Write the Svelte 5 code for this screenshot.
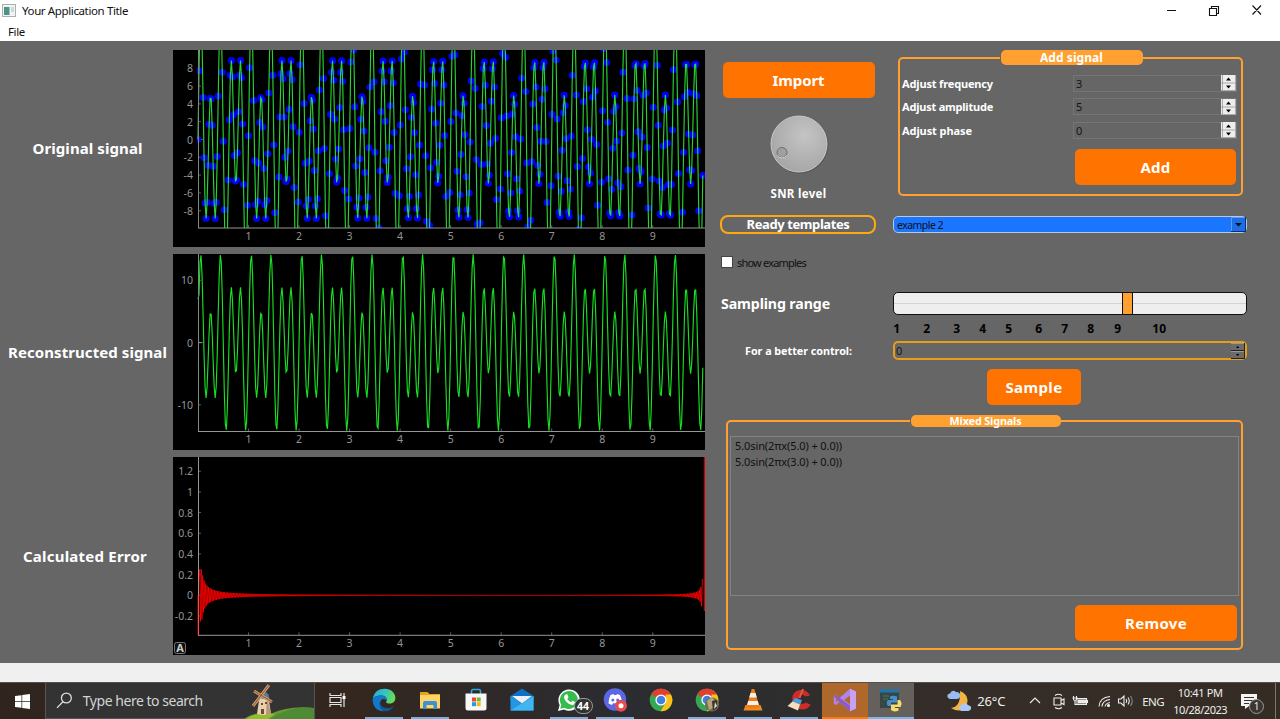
<script>
  const X0 = 25, UX = 50.53;
  const f = (t) => 10 * Math.sin(10 * Math.PI * t) + 5 * Math.sin(6 * Math.PI * t);

  const samples = [];
  for (let i = 0; i < 500; i++) {
    const t = i * 0.02002;
    samples.push([t, f(t)]);
  }
  const toPath = (pts, y0, uy) =>
    pts.map(([t, v], i) => (i ? 'L' : 'M') + (X0 + t * UX).toFixed(2) + ' ' + (y0 - v * uy).toFixed(2)).join('');

  const originalPath = toPath(samples, 89.5, 8.9);
  const dots = samples
    .filter((p) => Math.abs(p[1]) < 10.3)
    .map(([t, v]) => [X0 + t * UX, 89.5 - v * 8.9]);
  const fine = samples.map(([t, v], i) => [t, i ? v : 7]);
  const reconPath = toPath(fine, 88.6, 6.22);

  const err = [[0, 0], [0.005, -0.5], [0.012, 1.2 * 0.1]];
  for (let i = 1; i < 990; i++) {
    const t = 0.02 + i * 0.0145;
    if (t > 9.995) break;
    const env = Math.min(0.25, 0.014 / Math.pow(t, 1.1)) + Math.min(0.17, 0.0045 / (10.01 - t)) + 0.001;
    err.push([t, (i % 2 ? 1 : -1) * env]);
  }
  const errPath = toPath(err, 138.3, 103.4);

  const xt = [1, 2, 3, 4, 5, 6, 7, 8, 9];
  const plots = [
    { name: 'Original signal', w: 110, h: 197, base: 178, lab: 186, y0: 89.5, uy: 8.9, ticks: [8, 6, 4, 2, 0, -2, -4, -6, -8] },
    { name: 'Reconstructed signal', w: 159, h: 196, base: 177.5, lab: 185, y0: 88.6, uy: 6.22, ticks: [10, 0, -10] },
    { name: 'Calculated Error', w: 124, h: 198, base: 178.3, lab: 186, y0: 138.3, uy: 103.4, ticks: [1.2, 1, 0.8, 0.6, 0.4, 0.2, 0, -0.2] }
  ];
  const fields = [
    { label: 'Adjust frequency', w: 91, value: 3 },
    { label: 'Adjust amplitude', w: 91, value: 5 },
    { label: 'Adjust phase', w: 70, value: 0 }
  ];
  const scale = [[1, 8], [2, 30], [3, 30], [4, 26], [5, 26], [6, 30], [7, 26], [8, 26], [9, 27], [10, 45]];
  const mixed = ['5.0sin(2πx(5.0) + 0.0))', '5.0sin(2πx(3.0) + 0.0))'];
  const apps = [
    ['tasks', ''], ['edge', 'open'], ['files', 'open'], ['store', ''], ['mail', ''], ['whatsapp', 'open'],
    ['discord', 'open'], ['chrome', ''], ['chrome2', 'open'], ['vlc', 'open'], ['cc', 'open'], ['vs', 'alert'], ['python', 'active']
  ];

  // Tracks the letters of a label so that it fills the given width.
  function fit(node, width) {
    const natural = node.getBoundingClientRect().width;
    const n = node.textContent.length;
    const gap = (width - natural) / n;
    node.style.letterSpacing = gap.toFixed(3) + 'px';
  }
</script>

{#snippet chrome()}
  <circle cx="12" cy="12" r="11.3" fill="#34a853" />
  <path d="M2.2 6.4A11.3 11.3 0 0 1 21.8 6.4L12 12Z" fill="#ea4335" />
  <path d="M2.2 6.4L12 12V6.6H21.9A11.3 11.3 0 0 0 2.2 6.4Z" fill="#e0402f" />
  <path d="M21.9 6.5A11.3 11.3 0 0 1 11.6 23.3L16.8 14.6L16.6 6.5Z" fill="#fbc116" />
  <path d="M2.2 6.4L7.2 14.8L12 12Z" fill="#34a853" />
  <circle cx="12" cy="12" r="5.6" fill="#fff" />
  <circle cx="12" cy="12" r="4.3" fill="#3f7fe0" />
{/snippet}

<div class="window">
  <header class="title">
    <svg width="14" height="13" viewBox="0 0 14 13"><rect x=".5" y=".5" width="13" height="12" fill="#f2f4f4" stroke="#a9b0b2" /><rect x="2" y="3" width="5.5" height="8" fill="#4b9387" /><rect x="9" y="3" width="3" height="5" fill="#cbdad9" /></svg>
    <span class="cap"><span use:fit={106}>Your Application Title</span></span>
    <svg class="winbtns" width="94" height="12" viewBox="0 0 94 12" fill="none" stroke="#111" stroke-width="1.1"><path d="M1 6.5H10M43.500 4.500H50.500V11.500H43.500ZM45.500 4V2.500H52.500V9.500H51M86.500 1.500L95 10.500M95 1.500L86.500 10.500" /></svg>
  </header>
  <nav class="menu"><span use:fit={17}>File</span></nav>

  <main>
    <section class="plots">
      {#each plots as p, k}
        <h2 class:last={k === 2}><span use:fit={p.w}>{p.name}</span></h2>
        <svg class="plot" width="532" height={p.h} viewBox="0 0 532 {p.h}">
          <rect width="532" height={p.h} fill="#000" />
          <clipPath id="clip{k}"><rect x="24" y="0" width="508" height={p.base} /></clipPath>
          <g stroke="#969696" stroke-width="1">
            {#if k !== 2}<path d="M25.500 {p.y0}h4" />{/if}
            {#each p.ticks as v}<path opacity=".6" d="M25.500 {p.y0 - v * p.uy}h2.500" />{/each}
            {#each xt as v}<path opacity=".6" d="M{X0 + v * UX} {p.base}v-3" />{/each}
          </g>
          <g clip-path="url(#clip{k})">
            {#if k === 0}
              {#each dots as d}<circle cx={d[0]} cy={d[1]} r="3.500" fill="#0000fa" />{/each}
              <path d={originalPath} fill="none" stroke="#2cf038" stroke-width="1.150" opacity=".88" />
            {:else if k === 1}
              <path d={reconPath} fill="none" stroke="#16e022" stroke-width="1.150" />
            {:else}
              <path d={errPath} fill="none" stroke="#f00" stroke-width=".8" />
              <path d="M531.500 0V154" stroke="#c80000" stroke-width="1.500" />
            {/if}
          </g>
          <path d="M25.500 0V{p.base}" stroke={k === 2 ? '#969696' : '#7c8a7c'} fill="none" />
          {#if k === 2}<path d="M25.500 138V178" stroke="#ff4a4a" />{/if}
          <path d="M25 {p.base}H532" stroke="#969696" fill="none" />
          <g class="ticks">
            {#each p.ticks as v}<text x="20" y={p.y0 - v * p.uy + 4} text-anchor="end">{v}</text>{/each}
            {#each xt as v}<text x={X0 + v * UX} y={p.lab + 4} text-anchor="middle">{v}</text>{/each}
          </g>
          {#if k === 2}
            <rect x="1.500" y="185.500" width="11" height="11" rx="2" fill="#111" stroke="#777" />
            <text x="7" y="195" text-anchor="middle" class="auto">A</text>
          {/if}
        </svg>
      {/each}
    </section>

    <section class="controls">
      <div class="top">
        <div class="left">
          <button class="btn import"><span use:fit={52}>Import</span></button>
          <svg class="dial" width="60" height="60" viewBox="0 0 60 60">
            <defs><radialGradient id="knob" cx=".6" cy=".35" r=".75"><stop offset="0" stop-color="#c4c4c4" /><stop offset="1" stop-color="#a3a3a3" /></radialGradient></defs>
            <circle cx="30.500" cy="30.500" r="29" fill="#4e4e4e" opacity=".6" />
            <circle cx="30" cy="30" r="28" fill="url(#knob)" stroke="#c9c9c9" />
            <circle cx="13" cy="38.500" r="5" fill="#a0a0a0" stroke="#6c6c6c" />
            <path d="M8.500 41.500A5.400 5.400 0 0 0 17.500 41.500" fill="none" stroke="#cfcfcf" />
          </svg>
          <span class="snr"><span use:fit={56}>SNR level</span></span>
        </div>
        <fieldset class="add">
          <legend><span use:fit={63}>Add signal</span></legend>
          {#each fields as r}
            <div class="row">
              <span><span use:fit={r.w}>{r.label}</span></span>
              <div class="spin"><i>{r.value}</i>
                <svg width="15" height="16" viewBox="0 0 15 16"><rect width="15" height="16" fill="#eee" /><path d="M0 8H15M14.500 0V16M0 15.500H15M1.500 0V16" stroke="#aaa" fill="none" /><path d="M5 5.500L7.500 2.500L10 5.500ZM5 10.500L7.500 13.500L10 10.500Z" fill="#000" /></svg>
              </div>
            </div>
          {/each}
          <button class="btn addbtn"><span use:fit={30}>Add</span></button>
        </fieldset>
      </div>

      <div class="templates">
        <div class="ready"><span use:fit={103}>Ready templates</span></div>
        <div class="combo"><span use:fit={46}>example 2</span><svg width="15" height="15" viewBox="0 0 15 15"><rect width="15" height="15" fill="#1b6fe6" /><path d="M0 14.500H14.500V0" stroke="#0a2e78" fill="none" /><path d="M.5 14V.5H14" stroke="#5b9bff" fill="none" /><path d="M4 6H11L7.500 9.500Z" fill="#000820" /></svg></div>
      </div>

      <label class="check"><b></b><span use:fit={69}>show examples</span></label>

      <div class="sampling">
        <h3><span use:fit={109}>Sampling range</span></h3>
        <div class="slider"><u></u><em></em></div>
      </div>
      <div class="scale">{#each scale as s}<span style="width:{s[1]}px">{s[0]}</span>{/each}</div>
      <div class="better">
        <span><span use:fit={107}>For a better control:</span></span>
        <div class="bspin"><i>0</i><svg width="14" height="16" viewBox="0 0 14 16"><rect width="14" height="16" fill="#6b6b6b" /><path d="M0 7.500H13.500M0 15.500H13.500V0" stroke="#222" fill="none" /><path d="M0 .5H13M0 8.500H13" stroke="#999" fill="none" /><path d="M5 5L6.700 3L8.400 5ZM5 11L6.700 13L8.400 11Z" fill="#000" /></svg></div>
      </div>
      <button class="btn sample"><span use:fit={57}>Sample</span></button>

      <fieldset class="mixed">
        <legend><span use:fit={72}>Mixed Signals</span></legend>
        <div class="list">{#each mixed as m}<div><span use:fit={107}>{m}</span></div>{/each}</div>
        <button class="btn remove"><span use:fit={62}>Remove</span></button>
      </fieldset>
    </section>
  </main>
  <div class="status"></div>

  <footer>
    <div class="start"><svg width="15" height="15" viewBox="0 0 15 15" fill="#fff"><path d="M0 2L6.500 1.200V7H0ZM7.200 1.100L15 0V7H7.200ZM0 7.800H6.500V13.800L0 13ZM7.200 7.800H15V15L7.200 13.900Z" /></svg></div>
    <div class="search">
      <svg width="17" height="17" viewBox="0 0 17 17" fill="none" stroke="#ddd" stroke-width="1.300"><circle cx="10.500" cy="6" r="5" /><path d="M7 9.700L1 16" /></svg>
      <span class="ph"><span use:fit={120}>Type here to search</span></span>
      <svg class="mill" width="70" height="36" viewBox="0 0 70 36">
        <path d="M0 36Q10 28 26 31Q46 22 70 25V36Z" fill="#6b9a33" /><path d="M26 36Q45 22 70 25V36Z" fill="#4f8a37" /><path d="M2 36Q14 28 31 31L24 36Z" fill="#8fbf2b" />
        <path d="M15.500 14H24.500L27 31Q20 33 13 31Z" fill="#e8d0ac" /><path d="M23 14L27 31Q24 32 22 32Z" fill="#b99676" />
        <path d="M15 15Q16 8 21 9Q26 10 25 17Z" fill="#557a99" />
        <path d="M25 2L9 23M10 8L28 19" stroke="#d19a66" stroke-width="3" /><path d="M25 2L9 23M10 8L28 19" stroke="#76482e" stroke-width=".8" />
        <path d="M17 20h2v2h-2zM17 26h3v5h-3zM21 19h2v2h-2z" fill="#6b4935" />
      </svg>
    </div>

    <div class="apps">
      {#each apps as a}
        <div class="app {a[1]}">
          <svg width="24" height="24" viewBox="0 0 24 24">
            {#if a[0] === 'tasks'}
              <path d="M4 5V7.500H15V5M4 19V16.500H15V19M4 9.500H15V14.500H4ZM18 5V19" fill="none" stroke="#e6e6e6" stroke-width="1.200" /><rect x="16.500" y="8" width="3" height="3" fill="#fff" />
            {:else if a[0] === 'edge'}
              <defs><linearGradient id="ed" x1="0" y1="0" x2="1" y2=".3"><stop offset="0" stop-color="#29a7dd" /><stop offset=".6" stop-color="#35c5c1" /><stop offset="1" stop-color="#67dc55" /></linearGradient></defs>
              <path d="M.7 11C2 3.500 7 .7 12.500 .7C19 .7 23.500 5 23.400 10C23.300 14 20 16 16.500 15.500C13.500 15 14 13.700 14.700 12.700C15.500 9 12 7.500 9 7.500C5 7.500 2 9 .7 11Z" fill="url(#ed)" />
              <path d="M.7 11C2 9 5 7.500 9 7.500C13 7.600 15.400 9.500 14.700 12.500C12 9.500 8.500 11 8 15C7.500 19.500 11 23.300 13 23.300C5 24 .2 18 .7 11Z" fill="#1478c9" />
              <path d="M10 11.200C7 13 7.500 19 14.500 20C18 20.300 20.500 19 22 17.700C20 21.700 16 23.500 13 23.300C8 22 6 16 8.500 12.500Z" fill="#12569c" />
            {:else if a[0] === 'files'}
              <path d="M2 4H9.500L11.500 6H22V20H2Z" fill="#e5a520" /><path d="M2 7H22V20.500H2Z" fill="#ffd467" /><path d="M5 21V15Q5 13 7 13H17Q19 13 19 15V21H15.500V17H8.500V21Z" fill="#3a91d4" />
            {:else if a[0] === 'store'}
              <path d="M7.500 6V3.500Q7.500 1.500 9 1.500H15Q16.500 1.500 16.500 3.500V6" fill="none" stroke="#2ca8e4" stroke-width="1.600" /><path d="M1.500 5.500H22.500V20Q22.500 22.500 20 22.500H4Q1.500 22.500 1.500 20Z" fill="#f7f7f7" /><path d="M8 9.500h4v4h-4z" fill="#e8492f" /><path d="M12.700 9.500h4v4h-4z" fill="#78b82a" /><path d="M8 14.200h4v4h-4z" fill="#1f9de0" /><path d="M12.700 14.200h4v4h-4z" fill="#f8b51a" />
            {:else if a[0] === 'mail'}
              <path d="M.5 8L12 .5L23.500 8V13H.5Z" fill="#0f6fc4" /><path d="M.5 8L12 15.500L23.500 8V22.500H.5Z" fill="#2497e3" /><path d="M2 8H22L12 15.500Z" fill="#e9f1f7" /><path d="M23.500 8V22.500H.5L12 15.500Z" fill="#3fb5f2" />
            {:else if a[0] === 'whatsapp'}
              <path d="M1 23L2.600 17A10.700 10.700 0 1 1 7 21.500Z" fill="#fff" /><path d="M3.200 20.800L4.300 16.800A9 9 0 1 1 7.300 19.700Z" fill="#35bd4c" /><path d="M8.500 6.500L10.300 6.300L11.500 9.200L10.300 10.700Q11.500 13 14 14.200L15.400 12.800L18 14.100Q17.800 17 15 17Q8.500 15.500 7 9.500Q7 7.300 8.500 6.500Z" fill="#fff" />
            {:else if a[0] === 'discord'}
              <circle cx="12" cy="11.500" r="11.200" fill="#5b68e5" /><path d="M7.500 7L10.500 6L11 7H13.500L14 6L17 7Q19 11 19 15.500L15.500 17L14.500 15.300H10L9 17L5.500 15.500Q5.500 11 7.500 7Z" fill="#fff" /><circle cx="9.800" cy="12" r="1.500" fill="#5b68e5" /><circle cx="14.700" cy="12" r="1.500" fill="#5b68e5" /><circle cx="18" cy="17.800" r="6" fill="#e54c50" /><circle cx="18" cy="17.800" r="2.500" fill="#fff" />
            {:else if a[0] === 'chrome'}
              {@render chrome()}
            {:else if a[0] === 'chrome2'}
              {@render chrome()}
              <circle cx="17" cy="16.500" r="7" fill="#756b50" /><path d="M12 13Q16 8 19 11L18 20L14 22Z" fill="#b6a577" /><path d="M17 13L22 12V20L18 23Z" fill="#36342d" /><path d="M20 14l2 4-3 3z" fill="#ddd" />
            {:else if a[0] === 'vlc'}
              <path d="M4.500 17H19.500L21.500 22.500H2.500Z" fill="#f28b1e" /><path d="M10.700 1H13.300L18.500 19Q12 22 5.500 19Z" fill="#ef7d16" /><path d="M9.500 5H14.500L15.800 9.500H8.200ZM7.200 13H16.800L17.900 17H6.100Z" fill="#f4f1ec" />
            {:else if a[0] === 'cc'}
              <path d="M23 7.500C20 0 8 0 5.500 8C4 15 9 21 14.500 21.500C19 21.700 22 20 23.500 16.500L18.500 14.500C16 17.500 11.500 15.500 11.500 11C12 6 16.500 6 18 8.500Z" fill="#cb2d2b" /><path d="M12.500 10L16 1" stroke="#e45a40" stroke-width="2" /><path d="M8 10L15 12L13 17L5 14Z" fill="#4b9bd6" /><path d="M5.500 13.500L13 16.500L11 22.500L.5 18Z" fill="#f1dfc0" />
            {:else if a[0] === 'vs'}
              <path d="M17 .8L23 3.500V20.500L17 23.200L6.500 14L3 17L.8 15.800V8.200L3 7L6.500 10ZM17 7.500L11.200 12L17 16.500ZM3.200 9.500V14.500L5 12Z" fill="#b184e8" fill-rule="evenodd" /><path d="M17 .8L23 3.500V20.500L17 23.200Z" fill="#c9a1f4" /><path d="M.8 8.200L3 7L17 17.500V23.200L7 14.500Z" fill="#8e5ac5" />
            {:else}
              <path d="M1 2H20V20H1Z" fill="#384745" /><path d="M1 1.500H20V4.500H1Z" fill="#1977b8" /><path d="M4 8H10M4 11H9" stroke="#4f7b54" /><path d="M11 8.500Q14.500 7 18 8.500V14.500H12V18H9Q6.500 15 9 12H14V11H11Z" fill="#468fca" /><path d="M18.500 12H21Q23.800 15 21.500 19H16V20H19.500V22.500Q15 24.500 12 22V16.500H18.500Z" fill="#f7dc6b" />
            {/if}
          </svg>
          {#if a[0] === 'whatsapp'}<strong>44</strong>{/if}
        </div>
      {/each}
    </div>

    <div class="tray">
      <svg class="weather" width="26" height="24" viewBox="0 0 26 24"><path d="M14 2Q25 7 20 17Q15 25 5 19Q15 18 14 2Z" fill="#f5b43d" /><path d="M2 9Q0 5 4 4.500Q6 0 10 3Q15 3 14 8Q13 10 11 10H4Z" fill="#9bbbf0" /><path d="M14 21Q11 17 15.500 16Q19 12 22 16Q26 17 25 20Q24 22 22 22H15Z" fill="#a9c6f4" /></svg>
      <span class="temp"><span use:fit={28}>26°C</span></span>
      <svg class="sys" width="106" height="18" viewBox="0 0 106 18" fill="none" stroke="#eee" stroke-width="1.100">
        <path d="M2 11L7 6L12 11" />
        <path d="M26 6H33V13H26ZM33 8.500L36 7V12.500L33 11M27 3.500Q30.500 1 34 3.500M27 15.500Q30.500 18 34 15.500" />
        <path d="M49 6.500H58.500V12.500H49ZM59.500 8V11" /><path d="M50.500 8H57.500V11H50.500Z" fill="#eee" /><path d="M45.500 4V7Q45.500 8.500 47 8.500Q48.500 8.500 48.500 7V4M47 8.500V12.500H49M44.500 6H49.500" />
        <path d="M71 14.500Q71.500 5.500 82 4.500M74 14.500Q74.500 8.500 82 7.500M77 14.500Q77.500 11.500 82 10.500" /><circle cx="80.500" cy="13.500" r="1" fill="#eee" />
        <path d="M90.500 7H93L96 4V14L93 11H90.500ZM98 7Q99.500 9 98 11M100 5.500Q102.500 9 100 12.500" /><path d="M102.500 4Q106 9 102.500 14" stroke="#888" />
      </svg>
      <span class="eng"><span use:fit={22}>ENG</span></span>
      <div class="clock"><div><span use:fit={45}>10:41 PM</span></div><div><span use:fit={54}>10/28/2023</span></div></div>
      <div class="note"><svg width="17" height="17" viewBox="0 0 17 17"><path d="M0 1H16V13H8L4 16V13H0Z" fill="#f4f4f4" /><path d="M3 4.500H13M3 7.500H13M3 10.500H8" stroke="#3a3029" /></svg><strong>1</strong></div>
    </div>
  </footer>
</div>

<style>
  :global(body) { margin: 0; overflow: hidden; }
  * { box-sizing: border-box; }
  .window { width: 1280px; height: 719px; display: flex; flex-direction: column; font-family: 'Noto Sans', sans-serif; background: #fff; color: #111; white-space: nowrap; }
  .title { height: 21px; display: flex; align-items: center; padding: 0 20px 0 2px; font-size: 11.5px; }
  .cap { margin-left: 6px; flex: 1; }
  .title > svg:first-child { margin-bottom: 1px; }
  .menu { height: 20px; font-size: 11.5px; line-height: 21px; padding-left: 8px; }
  .winbtns { overflow: visible; margin-bottom: 2px; }
  main { height: 622px; background: #666; display: grid; grid-template-columns: 705px 1fr; }
  .plots { display: grid; grid-template-columns: 173px 532px; grid-template-rows: 197px 196px 198px; row-gap: 7px; padding-top: 9px; align-content: start; }
  .plot { display: block; }
  h2 { margin: 0 0 1px 2px; font-size: 15px; color: #fff; display: flex; align-items: center; justify-content: center; }
  h2.last { margin: 0 3px 1px 0; }
  .ticks text { font: 10.500px 'Noto Sans', sans-serif; fill: #969696; }
  .auto { font: bold 11px 'Noto Sans', sans-serif; fill: #ccc; }
  h3 { margin: 0; font-size: 14.200px; color: #fff; width: 172px; line-height: 24px; }
  .controls { padding: 9px 33px 0 15px; display: flex; flex-direction: column; }
  .top { display: flex; height: 147px; gap: 22px; }
  .left { width: 156px; display: flex; flex-direction: column; align-items: center; padding-left: 1px; }
  .btn { border: 0; border-radius: 5px; background: #ff7300; color: #fff; font: bold 15px 'Noto Sans', sans-serif; height: 36px; padding: 0; flex: none; }
  .import { width: 152px; margin: 12px 0 16px; }
  .dial { display: block; margin-bottom: 12px; flex: none; }
  .snr { color: #fff; font-weight: bold; font-size: 11.500px; line-height: 16px; }
  fieldset { border: 2px solid #ffa030; border-radius: 5px; margin: 0; min-width: 0; }
  legend { background: #ffa030; color: #fff; font-weight: bold; border-radius: 5px; text-align: center; padding: 0; margin: 0 auto; }
  .add { width: 345px; height: 146px; padding: 9px 2px 0 2px; }
  .add legend { width: 142px; height: 15px; line-height: 15px; font-size: 12px; position: relative; left: 1px; }
  .row { display: flex; justify-content: space-between; align-items: center; height: 18px; margin-bottom: 5.500px; color: #fff; font-weight: bold; font-size: 11px; }
  .add .row { padding-right: 2px; }
  .spin { width: 164px; height: 17px; border: 1px solid #757575; display: flex; align-items: center; justify-content: space-between; padding-left: 2px; }
  i { font-style: normal; font-weight: 400; font-size: 11px; color: #151515; }
  .addbtn { display: block; width: 161px; margin: 10px 3px 0 auto; }
  .templates { display: flex; gap: 17px; margin-top: 18px; height: 19px; align-items: center; }
  .ready { width: 156px; height: 19px; border: 2px solid #ffa812; border-radius: 8px; color: #fff; font-weight: bold; font-size: 13px; text-align: center; line-height: 15px; }
  .combo { width: 354px; height: 17px; border: 1px solid #b7c8df; border-radius: 5px; background: #1a75ff; display: flex; align-items: center; justify-content: space-between; padding-left: 3px; font-size: 10.500px; }
  .check { display: flex; align-items: center; gap: 4px; height: 16px; margin-top: 20px; font-size: 11px; }
  .check b { width: 12px; height: 12px; background: #fff; border: 1px solid #444; margin-left: 1px; }
  .sampling { display: flex; height: 24px; margin: 22px 0 0 1px; }
  .slider { width: 354px; height: 23px; border: 1px solid #111; border-radius: 5px; background: #eee; display: flex; align-items: stretch; background-image: linear-gradient(#d2d2d2, #d2d2d2); background-size: 100% 1px; background-position: 0 10px; background-repeat: no-repeat; }
  .slider u { width: 228px; }
  .slider em { width: 11px; background: #ffa030; border: solid #111; border-width: 0 1px; }
  .scale { display: flex; margin-left: 172px; height: 19px; margin-top: 5px; font-size: 12px; font-weight: bold; line-height: 16px; color: #000; }
  .scale span { display: flex; justify-content: flex-end; flex: none; }
  .better { display: flex; height: 19px; align-items: center; color: #fff; font-weight: bold; font-size: 10.800px; margin-top: 1px; }
  .better > span { width: 148px; padding-left: 25px; margin-right: 25px; }
  .bspin { width: 354px; height: 19px; border: 2px solid #e89e18; border-radius: 5px; display: flex; justify-content: space-between; align-items: center; padding-left: 1px; }
  .sample { width: 94px; margin: 9px 0 0 267px; }
  .mixed { width: 517px; height: 235px; margin: 10px 0 0 6px; padding: 9px 2px 0; }
  .mixed legend { width: 150px; height: 12px; line-height: 12px; font-size: 10.800px; position: relative; left: 1px; }
  .list { height: 160px; border: 1px solid #828282; padding: 1px 4px; font-size: 11px; line-height: 16px; color: #111; }
  .remove { display: block; width: 162px; margin: 9px 2px 0 auto; }
  .status { height: 19px; background: #f0f0f0; }
  footer { height: 37px; background: linear-gradient(90deg, #30241f 0, #33271f 28%, #2b2c31 48%, #2d2d2f 58%, #352d28 75%, #352c24 100%); display: flex; color: #eee; border-top: 1px solid #55504b; }
  .start { width: 45px; display: flex; align-items: center; justify-content: center; }
  .search { width: 270px; background: #333; border: 1px solid #555; border-top: 0; display: flex; align-items: center; }
  .search > svg:first-child { margin-left: 10px; }
  .ph { margin-left: 10px; font-size: 14px; color: #d4d4d4; width: 163px; }
  .mill { flex: none; }
  .apps { display: flex; }
  .app { width: 46.100px; height: 36px; display: flex; align-items: center; justify-content: center; border: solid transparent; border-width: 0 4px 2px; background-clip: padding-box; flex: none; }
  .app.open { background: linear-gradient(#76b2e0, #76b2e0) bottom / 38px 2px no-repeat border-box; }
  .app.alert { border-width: 0 0 2px; border-color: #ff7a12; background: #af682c; }
  .app.active { border-width: 0 0 2px; border-color: #76b9ed; background: #65605c; }
  .app svg { flex: none; }
  .app strong { border: 1px solid #999; border-radius: 8px; background: #333; color: #fff; font-size: 10.500px; line-height: 14px; width: 19px; text-align: center; flex: none; margin: 12px -12px 0 -7px; }
  .tray { display: flex; align-items: center; flex: 1; margin-left: 33px; border-right: 1px solid #777; margin-right: 4px; }
  .weather { flex: none; margin-left: -1px; }
  .temp { margin-left: 5px; font-size: 13px; width: 51px; }
  .sys { overflow: visible; flex: none; }
  .eng { margin-left: 8px; width: 22px; font-size: 11.500px; }
  .clock { width: 56px; margin-left: 8px; font-size: 11px; line-height: 17px; text-align: center; }
  .note { display: flex; margin-left: 13px; }
  .note strong { width: 15px; height: 15px; border-radius: 50%; border: 1px solid #999; background: #3b3632; font-size: 10px; line-height: 13px; text-align: center; margin: 6px 0 -6px -9px; font-weight: 400; flex: none; }
</style>
